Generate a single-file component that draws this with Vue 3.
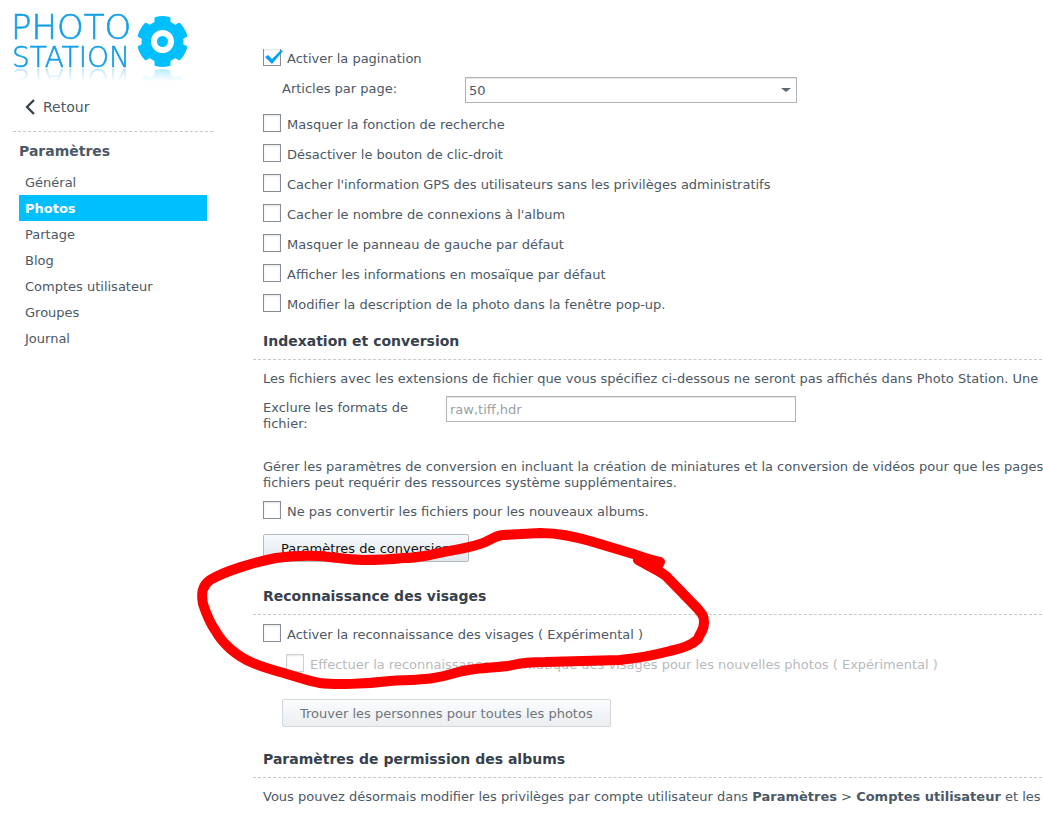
<script setup>
import { ref } from 'vue'

const menu = ['Général', 'Photos', 'Partage', 'Blog', 'Comptes utilisateur', 'Groupes', 'Journal']
const active = ref('Photos')

const pagination = ref(true)
const perPage = ref('50')
const formats = ref('')
const noConvert = ref(false)
const faces = ref(false)
const autoFaces = ref(false)

const options = ref([
  { id: 'search', label: 'Masquer la fonction de recherche', checked: false },
  { id: 'click', label: 'Désactiver le bouton de clic-droit', checked: false },
  { id: 'gps', label: "Cacher l'information GPS des utilisateurs sans les privilèges administratifs", checked: false },
  { id: 'hits', label: "Cacher le nombre de connexions à l'album", checked: false },
  { id: 'panel', label: 'Masquer le panneau de gauche par défaut', checked: false },
  { id: 'mosaic', label: 'Afficher les informations en mosaïque par défaut', checked: false },
  { id: 'popup', label: 'Modifier la description de la photo dans la fenêtre pop-up.', checked: false }
])
</script>

<template>
  <div class="page">
    <aside class="sidebar">
      <svg class="logo" width="176" height="53" viewBox="0 0 176 53" role="img" aria-label="Photo Station">
        <text class="logo-top" x="-2" y="24">PHOTO</text>
        <text class="logo-bottom" x="-1" y="52">STATION</text>
        <clipPath id="gear-clip"><circle cx="149.5" cy="26.5" r="25.5" /></clipPath>
        <g fill="#00bfff" clip-path="url(#gear-clip)">
          <circle cx="149.5" cy="26.5" r="21" />
          <rect x="141.5" y="1" width="16" height="51" rx="1" />
          <rect x="141.5" y="1" width="16" height="51" rx="1" transform="rotate(60 149.5 26.5)" />
          <rect x="141.5" y="1" width="16" height="51" rx="1" transform="rotate(120 149.5 26.5)" />
        </g>
        <circle cx="149.5" cy="26.5" r="11.5" fill="#fff" />
        <circle cx="149.5" cy="26.5" r="5.5" fill="#00bfff" />
      </svg>

      <a href="#" class="back">
        <svg width="10" height="16" viewBox="0 0 10 16"><path d="M9 1 L2 8 L9 15" fill="none" stroke="#333d47" stroke-width="2.2" /></svg>
        Retour
      </a>

      <h2>Paramètres</h2>
      <nav>
        <a v-for="item in menu" :key="item" href="#" :class="{ active: item === active }" @click.prevent="active = item">{{ item }}</a>
      </nav>
    </aside>

    <main>
      <label class="check"><input type="checkbox" v-model="pagination">Activer la pagination</label>
      <div class="field indent">
        <label for="perPage">Articles par page:</label>
        <div class="select">
          <select id="perPage" v-model="perPage">
            <option>50</option>
            <option>100</option>
          </select>
        </div>
      </div>
      <label v-for="o in options" :key="o.id" class="check"><input type="checkbox" v-model="o.checked">{{ o.label }}</label>

      <h3>Indexation et conversion</h3>
      <p>Les fichiers avec les extensions de fichier que vous spécifiez ci-dessous ne seront pas affichés dans Photo Station. Une</p>
      <div class="field formats">
        <label for="formats">Exclure les formats de fichier:</label>
        <input id="formats" type="text" v-model="formats" placeholder="raw,tiff,hdr">
      </div>
      <p class="convert">Gérer les paramètres de conversion en incluant la création de miniatures et la conversion de vidéos pour que les pages<br>fichiers peut requérir des ressources système supplémentaires.</p>
      <label class="check"><input type="checkbox" v-model="noConvert">Ne pas convertir les fichiers pour les nouveaux albums.</label>
      <button type="button" class="btn">Paramètres de conversion</button>

      <h3>Reconnaissance des visages</h3>
      <label class="check"><input type="checkbox" v-model="faces">Activer la reconnaissance des visages ( Expérimental )</label>
      <label class="check sub"><input type="checkbox" v-model="autoFaces" :disabled="!faces">Effectuer la reconnaissance automatique des visages pour les nouvelles photos ( Expérimental )</label>
      <button type="button" class="btn find" :disabled="!faces">Trouver les personnes pour toutes les photos</button>

      <h3>Paramètres de permission des albums</h3>
      <p>Vous pouvez désormais modifier les privilèges par compte utilisateur dans <b>Paramètres</b> &gt; <b>Comptes utilisateur</b> et les</p>
    </main>

    <!-- hand drawn mark around the face recognition section -->
    <svg class="mark" width="520" height="170" viewBox="195 522 520 170">
      <path d="M660 562 C650 560 640 556 630 553 L590 541 C575 537 560 533 540 533 L503 535 C493 536 490 541 480 544 C465 549 445 551 430 555 C415 558 410 558 403 558 C385 560 375 560 363 560 C345 559 330 557 320 556 C300 555 290 556 276 558 C255 562 225 571 210 580 C202 586 201 593 203 604 C207 616 210 623 215 630 C222 643 236 656 253 663 C265 668 270 669 280 672 C295 676 308 681 320 683 C335 685 365 684 390 681 C410 680 415 680 425 679 C445 678 455 671 475 669 C490 667 505 667 513 665 C525 662 535 662 545 662 L620 660 C640 658 655 655 670 651 C685 648 693 644 698 639 C700 632 704 632 704 622 C704 616 702 614 698 609 L666 576 C658 570 650 567 638 560 L659 564" />
    </svg>
  </div>
</template>

<style>
body {
  background: #fff;
}
</style>

<style scoped>
.page {
  position: relative;
  display: flex;
  min-height: 100vh;
  box-sizing: border-box;
  overflow: hidden;
  color: #4b5866;
  font-family: Verdana, "DejaVu Sans", sans-serif;
  font-size: 13px;
  line-height: 16px;
}

.sidebar {
  width: 200px;
  flex: none;
  padding: 15px 40px 0 13px;
}

.logo {
  display: block;
  overflow: visible;
  -webkit-box-reflect: below 0 linear-gradient(transparent 75%, rgba(255, 255, 255, 0.3));
}
.logo text {
  font-family: "DejaVu Sans Light", "DejaVu Sans", sans-serif;
  font-weight: 200;
  fill: #149fe4;
  stroke: #149fe4;
  stroke-width: 0.6px;
}
.logo-top {
  font-size: 34px;
}
.logo-bottom {
  font-size: 28px;
}

.back {
  display: flex;
  align-items: center;
  gap: 8px;
  height: 48px;
  margin-top: 15px;
  padding-left: 12px;
  border-bottom: 1px dashed #c8c8c8;
  color: #4b5866;
  font-size: 14px;
  text-decoration: none;
}

h2 {
  margin: 9px 0 8px 6px;
  font-size: 14px;
  line-height: 20px;
}

nav {
  display: flex;
  flex-direction: column;
  margin: 0 6px;
}
nav a {
  padding: 6px 6px 4px;
  color: #4b5866;
  text-decoration: none;
}
nav .active {
  background: #00bfff;
  color: #fff;
  font-weight: bold;
}

main {
  flex: 1;
  min-width: 0;
  margin-top: 49px;
  padding-bottom: 16px;
  overflow: hidden;
}

.check {
  display: flex;
  align-items: center;
  gap: 6px;
  box-sizing: border-box;
  height: 30px;
  padding: 2px 0 0 10px;
  white-space: nowrap;
}
.check:first-child {
  margin-top: -6px;
}
.check input {
  position: relative;
  flex: none;
  appearance: none;
  width: 18px;
  height: 18px;
  margin: 0 0 4px;
  border: 1px solid #868d96;
  background: #fff;
  box-shadow: inset 0 1px 2px #e2e4e7;
}
.check input:checked::after {
  content: "";
  position: absolute;
  left: -1px;
  top: -1px;
  width: 21px;
  height: 18px;
  background: #00a5ef;
  clip-path: polygon(2px 9px, 5px 7px, 9px 11px, 18px 2px, 20px 3px, 9px 16px);
}
.check.sub {
  padding-left: 33px;
  color: #b7babd;
}
.sub input {
  border-color: #cfd2d5;
}

.field {
  display: flex;
  padding-left: 10px;
}
.field label {
  width: 183px;
  flex: none;
}
.indent {
  height: 32px;
  padding: 4px 0 0 29px;
}
.indent label {
  padding-top: 4px;
}
.formats {
  margin-top: 9px;
}
.formats label {
  box-sizing: border-box;
  padding: 4px 30px 0 0;
}
.select {
  position: relative;
  width: 332px;
  height: 26px;
}
.select::after {
  content: "";
  position: absolute;
  right: 6px;
  top: 11px;
  border: solid transparent;
  border-width: 4px 5px 0;
  border-top-color: #5f6872;
}
select,
input[type="text"] {
  box-sizing: border-box;
  height: 26px;
  border: 1px solid #b0b4b9;
  border-radius: 0;
  background: #fff;
  box-shadow: inset 0 1px 0 #e4e6e8;
  color: #4b5866;
  font-family: inherit;
  font-size: 13px;
}
select {
  appearance: none;
  width: 100%;
  padding: 0 3px;
}
input[type="text"] {
  width: 350px;
  padding: 0 3px;
}
input::placeholder {
  color: #999fa6;
}

h3 {
  margin: 12px 1px 11px 0;
  padding: 0 0 8px 10px;
  border-bottom: 1px dashed #c8c8c8;
  color: #37414c;
  font-size: 14px;
  line-height: 20px;
}
h3 + .check {
  margin-top: -7px;
}

p {
  margin: 0;
  padding-left: 10px;
  white-space: nowrap;
}
.convert {
  margin: 27px 0 5px;
}

.btn {
  display: block;
  height: 28px;
  margin: 8px 0 24px 10px;
  padding: 0 17px;
  border: 1px solid #b5babf;
  border-radius: 2px;
  background: linear-gradient(#f7fafd, #e1e6ea);
  color: #111;
  font-family: inherit;
  font-size: 13px;
}
.find {
  margin: 20px 0 22px 29px;
}
.btn:disabled {
  border-color: #d3d7da;
  background: linear-gradient(#fafcfe, #ebeff2);
  color: #71757a;
}

.mark {
  position: absolute;
  left: 195px;
  top: 522px;
  pointer-events: none;
}
.mark path {
  fill: none;
  stroke: #f00;
  stroke-width: 10;
  stroke-linecap: round;
  stroke-linejoin: round;
}
</style>
